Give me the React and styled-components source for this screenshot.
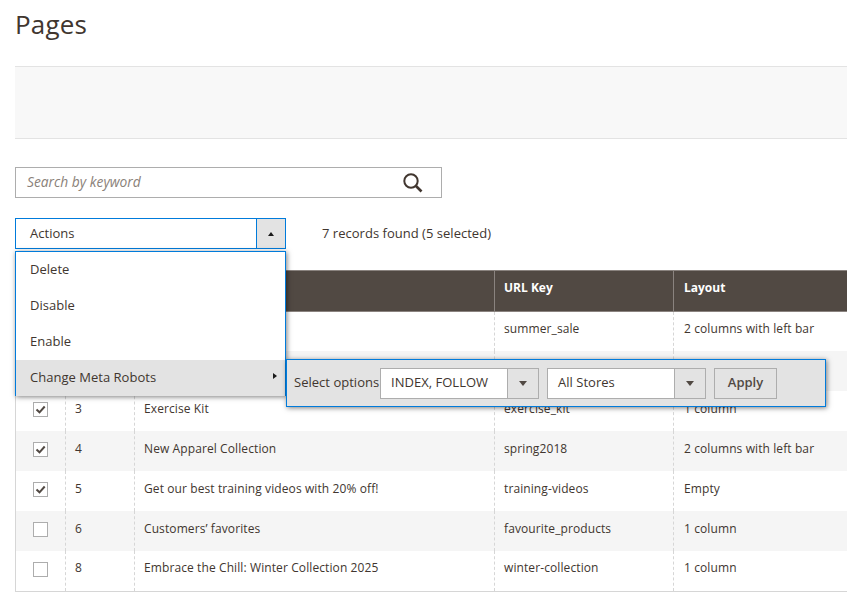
import React from "react";
import styled, { createGlobalStyle } from "styled-components";

const Global = createGlobalStyle`
  html, body { margin: 0; padding: 0; background: #fff; overflow: hidden; }
  body { font-family: "Open Sans", "Liberation Sans", sans-serif; font-size: 12px; color: #41362f; }
  * { box-sizing: border-box; }
`;

const Page = styled.div`
  width: 847px;
  height: 595px;
  padding-left: 15px;
  overflow: hidden;
`;
const Title = styled.h1`
  margin: 0;
  height: 66px;
  padding-top: 5px;
  font-size: 26px;
  line-height: 38px;
  font-weight: 400;
  color: #41362f;
  letter-spacing: 0.2px;
`;
const Band = styled.div`
  height: 73px;
  background: #f8f8f8;
  border-top: 1px solid #e3e3e3;
  border-bottom: 1px solid #e3e3e3;
`;
const Search = styled.div`
  margin-top: 28px;
  width: 427px;
  height: 31px;
  border: 1px solid #adadad;
  display: flex;
  align-items: center;
  justify-content: space-between;
  padding: 0 17px 0 11px;
`;
const Placeholder = styled.span`
  font-size: 13.8px;
  font-style: italic;
  color: #8a8179;
  margin-top: -2px;
`;
const Toolbar = styled.div`
  position: relative;
  margin-top: 20px;
  height: 52px;
  display: flex;
  align-items: flex-start;
  gap: 36px;
  letter-spacing: 0.02px;
`;
const Actions = styled.div`
  width: 271px;
  height: 31px;
  border: 1px solid #007bdb;
  display: flex;
  align-items: center;
`;
const ActionsLabel = styled.span`
  flex: 1;
  padding: 0 0 2px 14px;
  font-size: 13px;
`;
const ActionsToggle = styled.span`
  width: 29px;
  height: 100%;
  background: #e3e3e3;
  border-left: 1px solid #007bdb;
  display: flex;
  align-items: center;
  justify-content: center;
`;
const Count = styled.div`
  font-size: 13px;
  line-height: 31px;
`;
const Menu = styled.div`
  position: absolute;
  z-index: 5;
  left: 0;
  top: 33px;
  width: 271px;
  height: 145px;
  background: #fff;
  border: 1px solid #007bdb;
  box-shadow: 1px 1px 5px rgba(0, 0, 0, 0.5);
`;
const MenuItem = styled.div`
  position: relative;
  height: 36px;
  padding: 0 0 2px 14px;
  display: flex;
  align-items: center;
  font-size: 13px;
  background: ${(p) => (p.$active ? "#e3e3e3" : "transparent")};
`;
const MenuArrow = styled.span`
  position: absolute;
  right: 8px;
  top: 13px;
  width: 0;
  height: 0;
  border-left: 4px solid #1a1a1a;
  border-top: 3px solid transparent;
  border-bottom: 3px solid transparent;
`;
const Sub = styled.div`
  position: absolute;
  left: 270px;
  top: -1px;
  width: 540px;
  height: 48px;
  background: #e3e3e3;
  border: 1px solid #007bdb;
  box-shadow: 1px 1px 5px rgba(0, 0, 0, 0.5);
  display: flex;
  align-items: center;
  padding-left: 7px;
`;
const SubLabel = styled.span`
  font-size: 13px;
  width: 86px;
  white-space: nowrap;
  padding-bottom: 2px;
`;
const Select = styled.div`
  width: ${(p) => p.$w}px;
  height: 31px;
  margin-right: 8px;
  background: #fff;
  border: 1px solid #adadad;
  display: flex;
  align-items: center;
  font-size: 13px;
  padding-left: 10px;
`;
const SelectText = styled.span`
  flex: 1;
  padding-bottom: 2px;
`;
const SelectToggle = styled.span`
  width: 31px;
  height: 100%;
  background: #e3e3e3;
  border-left: 1px solid #adadad;
  display: flex;
  align-items: center;
  justify-content: center;
`;
const DownArrow = styled.span`
  width: 0;
  height: 0;
  border-top: 5px solid #514943;
  border-left: 4.5px solid transparent;
  border-right: 4.5px solid transparent;
  margin-top: 1px;
`;
const UpArrow = styled.span`
  width: 0;
  height: 0;
  border-bottom: 4px solid #1a1a1a;
  border-left: 3.5px solid transparent;
  border-right: 3.5px solid transparent;
`;
const Apply = styled.button`
  width: 63px;
  height: 31px;
  margin-left: 0;
  background: #e3e3e3;
  border: 1px solid #adadad;
  font-family: inherit;
  font-size: 13px;
  font-weight: 600;
  color: #514943;
  padding: 0 0 2px;
`;
const Table = styled.table`
  border-collapse: collapse;
  table-layout: fixed;
  width: 900px;
`;
const Th = styled.th`
  height: 41px;
  background: #514943;
  color: #fff;
  font-size: 12px;
  font-weight: 700;
  text-align: left;
  padding: 0 9px 7px;
  border-left: 1px solid #8a837f;
  border-bottom: 1px solid #8a837f;
  border-top: 1px solid #8a837f;
  &:first-child { border-left: none; }
  &:last-child { padding-left: 10px; }
`;
const Td = styled.td`
  height: ${(p) => p.$h}px;
  font-size: 12px;
  letter-spacing: 0.1px;
  padding: 0 9px ${(p) => p.$pb}px;
  background: ${(p) => (p.$alt ? "#f5f5f5" : "#fff")};
  border-left: 1px dashed #d6d6d6;
  border-bottom: ${(p) => (p.$last ? "1px solid #d6d6d6" : "none")};
  white-space: nowrap;
  &:first-child { border-left: 1px solid #d6d6d6; padding: 0 0 2px 17px; }
  &:last-child { padding-left: 10px; }
`;
const Box = styled.span`
  display: block;
  width: 15px;
  height: 15px;
  background: #fff;
  border: 1px solid #adadad;
  svg { display: block; }
`;

const rows = [
  ["", "", "summer_sale", "2 columns with left bar", true],
  ["", "", "", "", true],
  [3, "Exercise Kit", "exercise_kit", "1 column", true],
  [4, "New Apparel Collection", "spring2018", "2 columns with left bar", true],
  [5, "Get our best training videos with 20% off!", "training-videos", "Empty", true],
  [6, "Customers’ favorites", "favourite_products", "1 column", false],
  [8, "Embrace the Chill: Winter Collection 2025", "winter-collection", "1 column", false],
];

export default function App() {
  return (
    <Page>
      <Global />
      <Title>Pages</Title>
      <Band />
      <Search>
        <Placeholder>Search by keyword</Placeholder>
        <svg width="22" height="22" viewBox="0 0 22 22" fill="none" stroke="#41362f">
          <circle cx="9" cy="9" r="6.7" strokeWidth="2" />
          <path d="M14 14 L19.5 19.5" strokeWidth="2.6" />
        </svg>
      </Search>
      <Toolbar>
        <Actions>
          <ActionsLabel>Actions</ActionsLabel>
          <ActionsToggle><UpArrow /></ActionsToggle>
        </Actions>
        <Count>7 records found (5 selected)</Count>
        <Menu>
          <MenuItem>Delete</MenuItem>
          <MenuItem>Disable</MenuItem>
          <MenuItem>Enable</MenuItem>
          <MenuItem $active>
            Change Meta Robots
            <MenuArrow />
            <Sub>
              <SubLabel>Select options</SubLabel>
              <Select $w={159}>
                <SelectText>INDEX, FOLLOW</SelectText>
                <SelectToggle><DownArrow /></SelectToggle>
              </Select>
              <Select $w={159}>
                <SelectText>All Stores</SelectText>
                <SelectToggle><DownArrow /></SelectToggle>
              </Select>
              <Apply>Apply</Apply>
            </Sub>
          </MenuItem>
        </Menu>
      </Toolbar>
      <Table>
        <colgroup>
          <col width="50" />
          <col width="69" />
          <col width="360" />
          <col width="179" />
          <col width="242" />
        </colgroup>
        <thead>
          <tr>
            <Th />
            <Th />
            <Th />
            <Th>URL Key</Th>
            <Th>Layout</Th>
          </tr>
        </thead>
        <tbody>
          {rows.map((r, i) => {
            const alt = i % 2 === 1;
            const last = i === rows.length - 1;
            const h = i === 0 ? 39 : last ? 41 : 40;
            const pb = i === 0 ? 6 : last ? 7 : 5;
            const cell = { $alt: alt, $last: last, $h: h, $pb: pb };
            return (
              <tr key={i}>
                <Td {...cell}>
                  <Box>
                    {r[4] && (
                      <svg width="13" height="13" viewBox="0 0 13 13" fill="none" stroke="#514943" strokeWidth="2">
                        <path d="M2.5 6.5 L5.5 9.3 L10.7 3.5" />
                      </svg>
                    )}
                  </Box>
                </Td>
                <Td {...cell}>{r[0]}</Td>
                <Td {...cell}>{r[1]}</Td>
                <Td {...cell}>{r[2]}</Td>
                <Td {...cell}>{r[3]}</Td>
              </tr>
            );
          })}
        </tbody>
      </Table>
    </Page>
  );
}
